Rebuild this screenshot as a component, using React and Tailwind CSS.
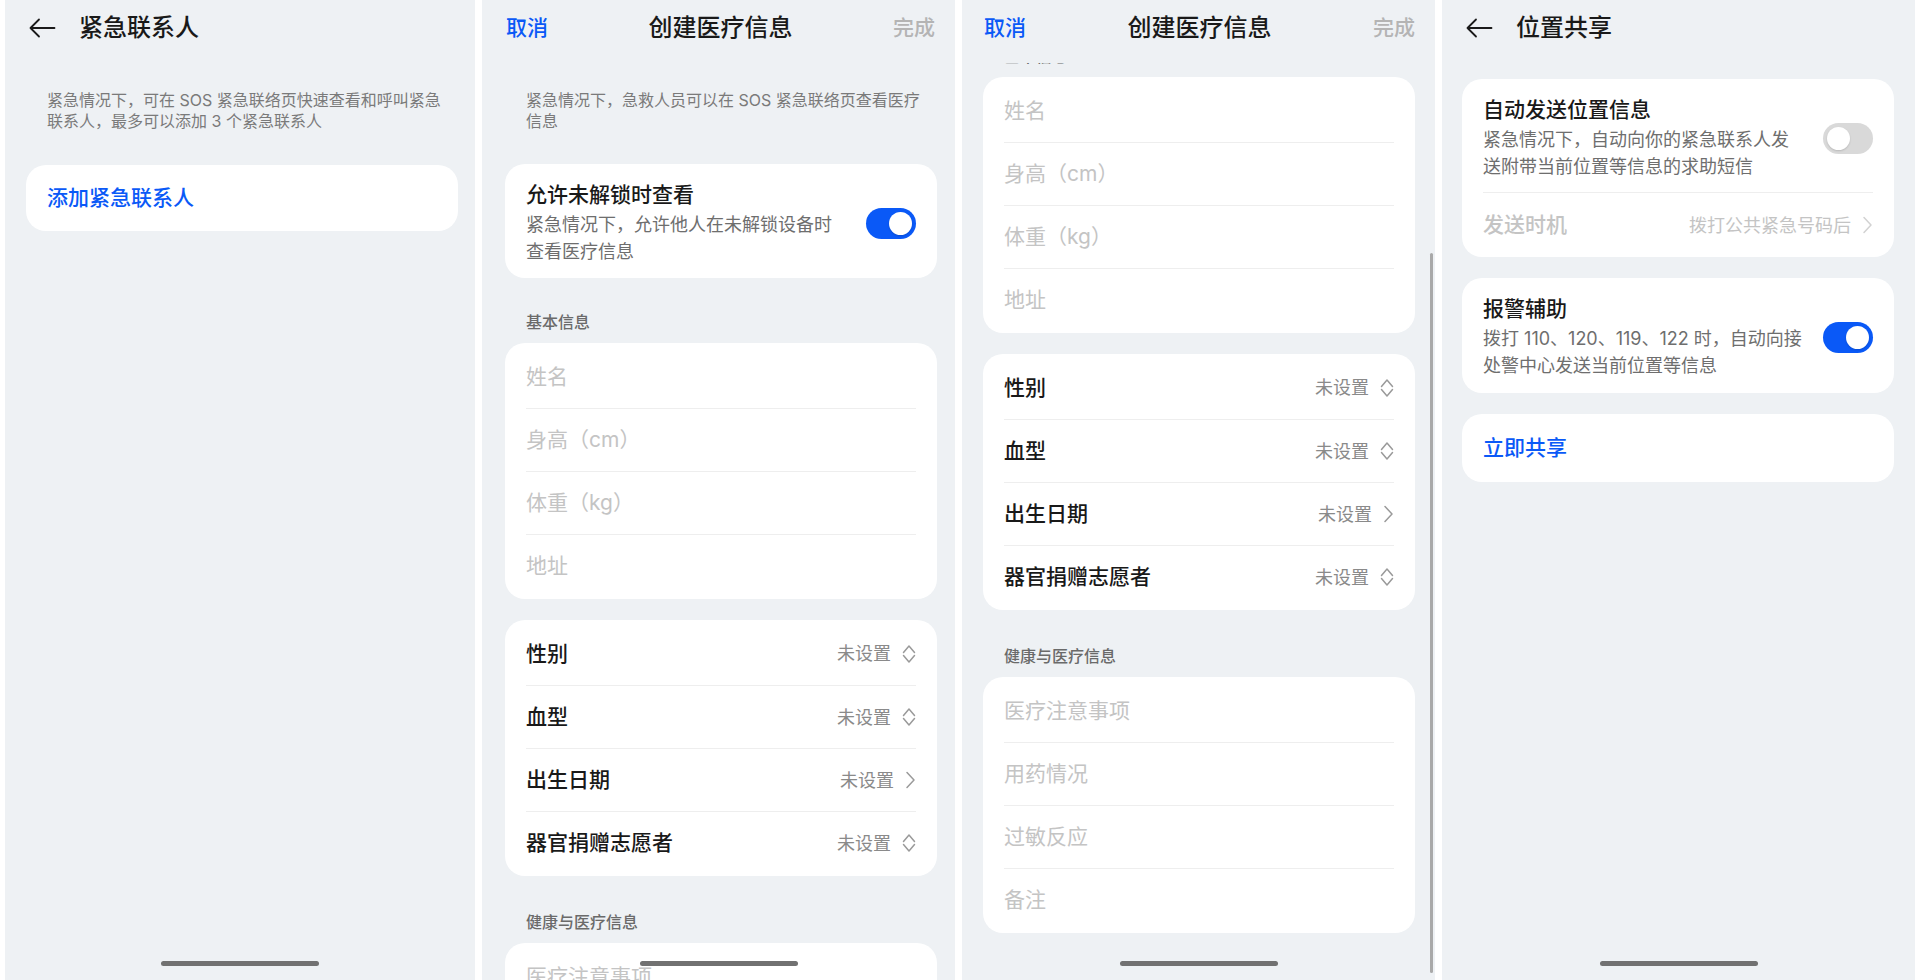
import React from 'react';

// Shared look: Inter for Latin/digits, Noto CJK for Chinese
const FONT = "font-['Inter','Noto_Sans_CJK_SC',sans-serif]";

function BackIcon() {
  return (
    <svg width="28" height="22" viewBox="0 0 28 22" fill="none" stroke="#1a1a1a" strokeWidth="1.8" strokeLinecap="round" strokeLinejoin="round">
      <path d="M26.5 11H2.5M11 2.5L2.5 11l8.5 8.5" />
    </svg>
  );
}

function UpDownIcon() {
  return (
    <svg width="14" height="20" viewBox="0 0 14 20" fill="none" stroke="#9a9a9a" strokeWidth="1.5" strokeLinecap="round" strokeLinejoin="round" className="ml-[11px]">
      <path d="M1.5 8.5L7 2l5.5 6.5" />
      <path d="M1.5 11.5L7 18l5.5-6.5" />
    </svg>
  );
}

function ChevronIcon({ color = '#9a9a9a' }) {
  return (
    <svg width="11" height="18" viewBox="0 0 11 18" fill="none" stroke={color} strokeWidth="1.5" strokeLinecap="round" strokeLinejoin="round" className="ml-[11px]">
      <path d="M2 1.5L9 9l-7 7.5" />
    </svg>
  );
}

function Toggle({ on }) {
  return (
    <div
      className={`w-[50px] h-[31px] rounded-full flex items-center px-[4px] shrink-0 ${
        on ? 'bg-[#0a59f7] justify-end' : 'bg-[#d9d9d9] justify-start'
      }`}
    >
      <div className="w-[23px] h-[23px] rounded-full bg-white shadow-[0_1px_2px_rgba(0,0,0,0.15)]" />
    </div>
  );
}

function HomeBar() {
  return (
    <div className="absolute bottom-[14px] left-1/2 -translate-x-1/2 w-[158px] h-[5px] rounded-full bg-[#717171]" />
  );
}

function BackHeader({ title }) {
  return (
    <div className="h-[56px] shrink-0 flex items-center pl-[23px]">
      <BackIcon />
      <span className="ml-[23px] text-[24px] leading-[32px] font-medium text-[#191919]">{title}</span>
    </div>
  );
}

function FormHeader({ height, pl }) {
  return (
    <div className={`shrink-0 grid grid-cols-[1fr_auto_1fr] items-start pr-[20px] ${height} ${pl}`}>
      <span className="mt-[14px] text-[21px] leading-[28px] font-medium text-[#0a59f7]">取消</span>
      <span className="mt-[12px] text-[24px] leading-[32px] font-medium text-[#191919]">创建医疗信息</span>
      <span className="mt-[14px] text-right text-[21px] leading-[28px] font-medium text-[#b4b4b4]">完成</span>
    </div>
  );
}

function Card({ className = '', children }) {
  return <div className={`w-[432px] bg-white rounded-[20px] ${className}`}>{children}</div>;
}

function InputCard({ items, className = '' }) {
  return (
    <Card className={`px-[21px] py-[2px] ${className}`}>
      {items.map((label, i) => (
        <div
          key={label}
          className={`h-[63px] flex items-center text-[21px] text-[#c4c4c4] ${i ? 'border-t border-[#eeeeee]' : ''}`}
        >
          {label}
        </div>
      ))}
    </Card>
  );
}

const SELECTS = [
  { label: '性别', kind: 'updown' },
  { label: '血型', kind: 'updown' },
  { label: '出生日期', kind: 'arrow' },
  { label: '器官捐赠志愿者', kind: 'updown' },
];

function SelectCard({ className = '' }) {
  return (
    <Card className={`px-[21px] py-[2px] ${className}`}>
      {SELECTS.map(({ label, kind }, i) => (
        <div
          key={label}
          className={`h-[63px] flex items-center justify-between ${i ? 'border-t border-[#eeeeee]' : ''}`}
        >
          <span className="text-[21px] font-medium text-[#191919]">{label}</span>
          <span className="flex items-center">
            <span className="text-[18px] text-[#8a8a8a]">未设置</span>
            {kind === 'arrow' ? <ChevronIcon /> : <UpDownIcon />}
          </span>
        </div>
      ))}
    </Card>
  );
}

function SectionLabel({ className = '', children }) {
  return (
    <div className={`px-[21px] text-[16px] leading-[20px] font-medium text-[#6a6a6a] ${className}`}>{children}</div>
  );
}

function MedicalBody() {
  return (
    <div className="flex flex-col pt-[34px]">
      <p className="px-[21px] text-[16px] leading-[21px] text-[#7a7a7a] whitespace-nowrap">
        紧急情况下，急救人员可以在 SOS 紧急联络页查看医疗
        <br />
        信息
      </p>
      <Card className="mt-[32px] px-[21px] pt-[17px] pb-[13px] flex items-center">
        <div className="flex-1">
          <div className="text-[21px] leading-[28px] font-medium text-[#191919]">允许未解锁时查看</div>
          <div className="mt-[2px] text-[18px] leading-[27px] text-[#6e6e6e] whitespace-nowrap">
            紧急情况下，允许他人在未解锁设备时
            <br />
            查看医疗信息
          </div>
        </div>
        <Toggle on />
      </Card>
      <SectionLabel className="mt-[34px]">基本信息</SectionLabel>
      <InputCard className="mt-[11px]" items={['姓名', '身高（cm）', '体重（kg）', '地址']} />
      <SelectCard className="mt-[21px]" />
      <SectionLabel className="mt-[36px]">健康与医疗信息</SectionLabel>
      <InputCard className="mt-[11px]" items={['医疗注意事项', '用药情况', '过敏反应', '备注']} />
    </div>
  );
}

function ContactsPanel() {
  return (
    <div className="relative w-[470px] h-[980px] shrink-0 overflow-hidden bg-[#eef1f4] flex flex-col">
      <BackHeader title="紧急联系人" />
      <div className="pl-[21px] flex flex-col">
        <p className="mt-[34px] px-[21px] text-[16px] leading-[21px] text-[#7a7a7a] whitespace-nowrap">
          紧急情况下，可在 SOS 紧急联络页快速查看和呼叫紧急
          <br />
          联系人，最多可以添加 3 个紧急联系人
        </p>
        <Card className="mt-[33px] h-[66px] px-[21px] flex items-center">
          <span className="text-[21px] font-medium text-[#0a59f7]">添加紧急联系人</span>
        </Card>
      </div>
      <HomeBar />
    </div>
  );
}

function MedicalPanel() {
  return (
    <div className="relative w-[473px] h-[980px] shrink-0 overflow-hidden bg-[#eef1f4] flex flex-col">
      <FormHeader height="h-[56px]" pl="pl-[24px]" />
      <div className="pl-[23px]">
        <MedicalBody />
      </div>
      <HomeBar />
    </div>
  );
}

function MedicalScrolledPanel() {
  return (
    <div className="relative w-[473px] h-[980px] shrink-0 overflow-hidden bg-[#eef1f4] flex flex-col">
      <FormHeader height="h-[63px]" pl="pl-[22px]" />
      <div className="flex-1 overflow-hidden pl-[21px]">
        <div className="mt-[-273px]">
          <MedicalBody />
        </div>
      </div>
      <div className="absolute right-[2px] top-[253px] w-[3px] h-[720px] rounded-full bg-[#a9a9a9]" />
      <HomeBar />
    </div>
  );
}

function LocationPanel() {
  return (
    <div className="relative w-[473px] h-[980px] shrink-0 overflow-hidden bg-[#eef1f4] flex flex-col">
      <BackHeader title="位置共享" />
      <div className="pl-[20px] flex flex-col">
        <Card className="mt-[23px] px-[21px]">
          <div className="flex items-center pt-[17px] pb-[12px]">
            <div className="flex-1">
              <div className="text-[21px] leading-[28px] font-medium text-[#191919]">自动发送位置信息</div>
              <div className="mt-[2px] text-[18px] leading-[27px] text-[#6e6e6e] whitespace-nowrap">
                紧急情况下，自动向你的紧急联系人发
                <br />
                送附带当前位置等信息的求助短信
              </div>
            </div>
            <Toggle />
          </div>
          <div className="h-[65px] border-t border-[#eeeeee] flex items-center justify-between">
            <span className="text-[21px] font-medium text-[#c4c4c4]">发送时机</span>
            <span className="flex items-center">
              <span className="text-[18px] text-[#c4c4c4]">拨打公共紧急号码后</span>
              <ChevronIcon color="#d2d2d2" />
            </span>
          </div>
        </Card>
        <Card className="mt-[21px] px-[21px] pt-[17px] pb-[14px] flex items-center">
          <div className="flex-1">
            <div className="text-[21px] leading-[28px] font-medium text-[#191919]">报警辅助</div>
            <div className="mt-[2px] text-[18px] leading-[27px] text-[#6e6e6e] whitespace-nowrap">
              拨打 110、120、119、122 时，自动向接
              <br />
              处警中心发送当前位置等信息
            </div>
          </div>
          <Toggle on />
        </Card>
        <Card className="mt-[21px] h-[68px] px-[21px] flex items-center">
          <span className="text-[21px] font-medium text-[#0a59f7]">立即共享</span>
        </Card>
      </div>
      <HomeBar />
    </div>
  );
}

export default function App() {
  return (
    <div className={`w-[1920px] h-[980px] bg-white flex gap-[7px] pl-[5px] overflow-hidden ${FONT}`}>
      <ContactsPanel />
      <MedicalPanel />
      <MedicalScrolledPanel />
      <LocationPanel />
    </div>
  );
}
